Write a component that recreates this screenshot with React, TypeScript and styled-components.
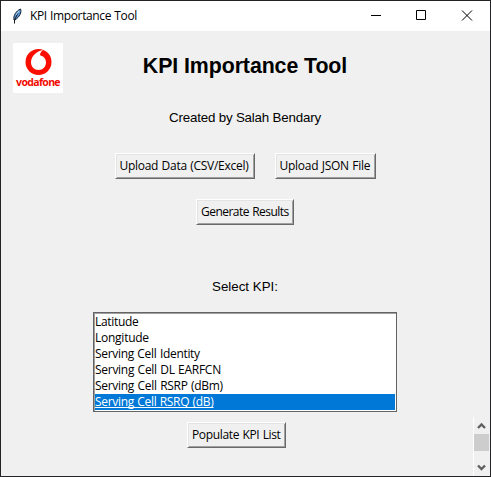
import React from 'react';
import styled, { createGlobalStyle } from 'styled-components';

const GlobalStyle = createGlobalStyle`
  * { box-sizing: border-box; }
  body { margin: 0; background: #242424; }
`;

const Window = styled.div`
  width: 491px;
  height: 477px;
  border: 1px solid #242426;
  background: #f0f0f0;
  display: flex;
  flex-direction: column;
  color: #000;
  font-family: 'Open Sans', 'Noto Sans', sans-serif;
  font-size: 12px;
  line-height: 16px;
  white-space: nowrap;
`;

const TitleBar = styled.header`
  height: 30px;
  flex: none;
  display: flex;
  align-items: center;
  background: #fff;
`;

const AppIcon = styled.svg`
  width: 16px;
  height: 16px;
  margin: 0 5px 0 8px;
`;

const Label = styled.span<{ $spacing: number }>`
  letter-spacing: ${(p) => p.$spacing}px;
  word-spacing: 0.6px;
`;

const Controls = styled.div`
  margin-left: auto;
  display: flex;
`;

const Control = styled.svg`
  width: 45px;
  height: 30px;
  fill: none;
  stroke: #000;
`;

const Client = styled.main`
  flex: 1;
  display: grid;
  grid-template-columns: 72px 344px 56px 17px;
`;

const LogoBox = styled.div`
  width: 50px;
  height: 50px;
  margin: 12px 0 0 12px;
  background: #fff;
  display: flex;
  flex-direction: column;
  align-items: center;
`;

const LogoMark = styled.svg`
  width: 50px;
  height: 32px;
  flex: none;
`;

const LogoName = styled.span`
  font: bold 10.5px/15px 'Open Sans', sans-serif;
  letter-spacing: -0.66px;
  color: #f10b00;
`;

const Form = styled.div`
  display: flex;
  flex-direction: column;
  align-items: center;
`;

const Heading = styled.h1`
  margin: 22px 0 0;
  font: bold 21.33px/26px 'Liberation Sans', Arial, sans-serif;
  letter-spacing: -0.08px;
`;

const Caption = styled.p<{ $top: number; $spacing: number }>`
  margin: ${(p) => p.$top}px 0 0;
  font: 13.33px/18px 'Liberation Sans', Arial, sans-serif;
  letter-spacing: ${(p) => p.$spacing}px;
`;

const ButtonRow = styled.div<{ $top: number }>`
  display: flex;
  gap: 20px;
  margin-top: ${(p) => p.$top}px;
`;

const Button = styled.button<{ $width: number }>`
  width: ${(p) => p.$width}px;
  height: 26px;
  padding: 0 0 0 4px;
  border: 1px solid;
  border-color: #fff #696969 #696969 #fff;
  box-shadow: inset 1px 1px #e3e3e3, inset -1px -1px #a0a0a0;
  background: #f0f0f0;
  color: #000;
  font: inherit;
  text-align: left;
`;

const ListBox = styled.ul`
  width: 304px;
  height: 100px;
  margin: 16px 0 0;
  padding: 1px;
  list-style: none;
  background: #fff;
  border: 1px solid #646464;
  box-shadow: inset 1px 1px #a0a0a0;
`;

const Item = styled.li<{ $selected: boolean }>`
  height: 16px;
  background: ${(p) => (p.$selected ? '#0078d7' : '#fff')};
  color: ${(p) => (p.$selected ? '#fff' : '#000')};
  text-decoration: ${(p) => (p.$selected ? 'underline' : 'none')};
  text-underline-offset: 1px;
  text-decoration-skip-ink: none;
`;

const ListActions = styled.div`
  align-self: flex-start;
  margin: 10px 0 0 114px;
`;

const ScrollBar = styled.div`
  grid-column: 4;
  align-self: end;
  height: 59px;
  display: flex;
  flex-direction: column;
  border-left: 1px solid #fff;
  padding-right: 1px;
`;

const Arrow = styled.svg`
  height: 17px;
  width: 15px;
  fill: none;
  stroke: #606060;
  stroke-width: 2.4;
`;

const Thumb = styled.div`
  height: 17px;
  margin-bottom: 8px;
  background: #cdcdcd;
`;

const kpis = [
  { name: 'Latitude', spacing: -0.3 },
  { name: 'Longitude', spacing: -0.25 },
  { name: 'Serving Cell Identity', spacing: -0.31 },
  { name: 'Serving Cell DL EARFCN', spacing: -0.28 },
  { name: 'Serving Cell RSRP (dBm)', spacing: -0.29 },
  { name: 'Serving Cell RSRQ (dB)', spacing: -0.32 },
];

export default function App() {
  return (
    <>
      <GlobalStyle />
      <Window>
        <TitleBar>
          <AppIcon viewBox="0 0 16 16">
            <path d="M5 12C4 8 7 3 11.5 1C13 4 10.5 9 6 12Z" fill="#5b9ae0" stroke="#17202b" />
            <path d="M5.5 15.5V12L9 5" fill="none" stroke="#10151c" />
            <path d="M7 7L10 3" stroke="#b6d8f5" />
          </AppIcon>
          <Label $spacing={-0.38}>KPI Importance Tool</Label>
          <Controls>
            <Control viewBox="0 0 45 30"><path d="M16 14.5H26" /></Control>
            <Control viewBox="0 0 45 30"><path d="M16.5 9.5H25.5V18.5H16.5Z" /></Control>
            <Control viewBox="0 0 45 30"><path d="M17 9.5L27 19.5M27 9.5L17 19.5" /></Control>
          </Controls>
        </TitleBar>
        <Client>
          <LogoBox>
            <LogoMark viewBox="0 0 50 32">
              <circle cx="25.5" cy="19" r="13" fill="#fb0d00" />
              <path d="M30.5 7C26 7.5 18 11.5 18 19.5C18 24 21.5 27 25.5 27C30 27 33 23.5 33 19.5C33 15.5 30.5 13 27 12.2C27 10 28.5 7.8 30.5 7Z" fill="#fff" />
            </LogoMark>
            <LogoName>vodafone</LogoName>
          </LogoBox>
          <Form>
            <Heading>KPI Importance Tool</Heading>
            <Caption $top={30} $spacing={-0.19}>Created by Salah Bendary</Caption>
            <ButtonRow $top={26}>
              <Button $width={140}><Label $spacing={-0.28}>Upload Data (CSV/Excel)</Label></Button>
              <Button $width={101}><Label $spacing={-0.27}>Upload JSON File</Label></Button>
            </ButtonRow>
            <ButtonRow $top={20}>
              <Button $width={98}><Label $spacing={-0.52}>Generate Results</Label></Button>
            </ButtonRow>
            <Caption $top={53} $spacing={0}>Select KPI:</Caption>
            <ListBox>
              {kpis.map((k, i) => (
                <Item key={k.name} $selected={i === 5}>
                  <Label $spacing={k.spacing}>{k.name}</Label>
                </Item>
              ))}
            </ListBox>
            <ListActions>
              <Button $width={99}><Label $spacing={-0.35}>Populate KPI List</Label></Button>
            </ListActions>
          </Form>
          <ScrollBar>
            <Arrow viewBox="0 0 15 17"><path d="M4 11L7.5 7.5L11 11" /></Arrow>
            <Thumb />
            <Arrow viewBox="0 0 15 17"><path d="M4 6.5L7.5 10L11 6.5" /></Arrow>
          </ScrollBar>
        </Client>
      </Window>
    </>
  );
}
